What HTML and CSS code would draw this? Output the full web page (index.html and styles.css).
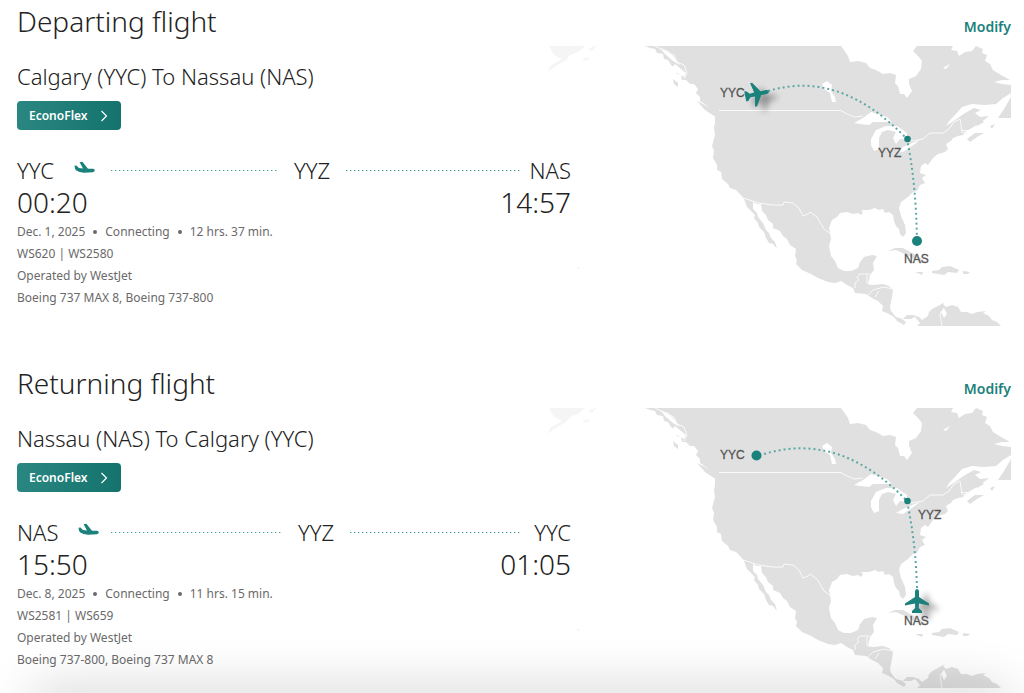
FILE: index.html
```html
<!DOCTYPE html>
<html lang="en">
<head>
<meta charset="utf-8">
<title>Flight summary</title>
<meta name="viewport" content="width=device-width, initial-scale=1">
<link rel="stylesheet" href="styles.css">
</head>
<body>
<svg class="defs" aria-hidden="true">
  <defs>
    <filter id="shadow" x="-50%" y="-50%" width="200%" height="200%"><feGaussianBlur stdDeviation="3"/></filter>
    <symbol id="takeoff" viewBox="0 0 21 13">
      <path d="M.5 4.800 2.400 4.600 5 7 9 7.400 5.600 1.200 8.400 .8 14 7.800 19.200 7.700Q21 8.200 20.800 9.600 20.600 11 19 11.200L10 11.800Q5 11.400 2.400 9.400 .6 8 .5 4.800Z"/>
    </symbol>
    <g id="plane">
      <path d="M0-12Q2-12 2-9.500V-4L12 2.500V4.500L2 2.500 1.800 7 5 10V12H-5V10L-1.800 7-2 2.500-12 4.500V2.500L-2-4V-9.500Q-2-12 0-12Z"/>
    </g>
    <g id="basemap">
      <g class="land">
        <path d="M645 46 650 48 655 49 657 53 663 54 664 59 668 60 671 65 675 68 677 74 681 75 682 80 686 80 690 84 694 84 698 89 696 93 700 97 700 101 706 105 712 111 715 115 715 123 714 128 715 135 712 146 714 151 713 158 717 165 717 170 721 172 722 179 728 184 730 188 736 190 741 195 744 199 747 207 750 210 755 215 754 218 758 223 759 227 764 232 766 238 769 243 773 244 777 249 775 242 771 238 769 233 766 230 763 223 758 217 757 213 753 209 753 202 757 204 761 204 762 211 766 215 768 220 773 224 773 228 780 231 783 236 787 239 790 245 796 249 795 256 797 260 796 264 802 270 811 274 818 278 828 282 835 283 841 281 847 285 853 288 855 293 866 294 872 298 878 301 883 306 882 311 887 313 894 317 897 321 904 325 906 322 902 319 911 319 915 317 920 323 917 326H1001L997 322 992 320 989 316 983 313 986 311 977 312 972 314 967 312 961 312 958 307 952 305 946 307 943 304 945 302 938 306 932 309 929 312 928 316 922 320 919 317 913 315 907 315 903 319 896 317 891 311 890 307 891 302 892 297 893 290 889 286 883 284 873 285 868 284 870 275 874 270 873 263 877 256 872 255 864 257 860 262 858 268 851 271 844 271 838 268 835 261 831 256 829 246 831 239 830 233 829 228 832 220 837 217 840 213 847 212 853 214 858 213 861 215 863 212 861 210 869 210 875 208 879 210 883 209 885 213 889 212 893 215 894 221 896 226 899 229 900 234 903 237 906 233 905 225 901 216 899 208 901 202 908 197 913 192 917 191 920 185 925 183 922 178 926 175 920 173 921 166 925 163 928 165 933 158 938 154 945 152 948 149 946 144 951 141 953 138 958 136 963 135 966 131 972 128 978 124 984 120 989 116 980 117 975 113 981 110 974 108 965 113 955 120 946 126 950 120 954 116 962 107 972 104 984 105 996 104 1003 98 1011 93V85L1002 84 994 82 1002 80 1010 80 1001 75 993 70 990 64 985 61 987 55 982 53 983 49 976 46 972 51 965 52 959 56 957 51 951 50 953 46H917L913 51 918 56 922 61 921 69 916 76 909 79 909 84 912 91 907 98 904 94 900 94 898 86 895 83 896 75 890 73 883 74 876 70 870 68 866 63 858 61 850 62 848 56 844 50 841 46Z"/>
        <path d="M998 118 1004 109 1011 97V118ZM967 139 975 133 984 133 977 137 970 142ZM977 116 984 122 977 126 973 121ZM990 126 995 124 992 129Z"/>
        <path d="M673 79 678 83 678 87 674 84ZM697 101 705 105 715 112 719 117 714 116 705 110Z"/>
        <path d="M888 251 895 248 903 248 914 254 923 260 929 263 920 263 907 255 896 250ZM932 271 939 270 942 267 950 266 959 270 957 273 948 272 944 275 932 273ZM915 272 923 272 922 275ZM963 271 970 272 968 274 963 274Z"/>
      </g>
      <path class="haze" d="M549 46H585L578 52 570 55 566 60 554 67 548 72 550 66 562 59 554 55ZM588 49 597 45 592 51ZM582 59 590 57 586 61ZM577 267 580 267 578 270Z"/>
      <g class="water">
        <path d="M822 84 827 81 832 85 831 91 835 97 836 102 832 102 830 93 824 89Z"/>
        <path d="M854 123 863 118 871 112 878 114 887 117 892 122 882 122 873 122 869 125 860 124Z"/>
        <path d="M871 139 876 130 886 126 897 126 907 133 907 140 900 139 896 144 893 138 896 132 888 130 882 132 879 138 879 149 874 151 871 145Z"/>
        <path d="M896 151 903 147 912 143 920 140 912 146 903 152ZM943 68 950 64 946 69ZM941 312 944 308 947 314 944 318Z"/>
        <path d="M671 69 675 64 681 69 686 73 684 77 677 73ZM660 48 668 51 674 57 680 65 673 61 665 54Z"/>
      </g>
      <path class="border" d="M655 46 667 52 674 55 677 62 684 65 687 73 684 79M719 110.500H841L845 113 854 117 863 116M907 138 912 141 923 139 930 133 943 133 949 129 954 122 960 119 962 132 967 134M969 131 961 130M743 198 759 203 772 205 783 205 784 202 793 203 799 208 803 216 808 214 810 212 817 217 824 229 831 234M855 288V283L859 280 857 277 860 274H870M867 275V283L871 285M868 295 873 290 884 287 893 289M875 297 879 291M944 308 940 314 942 326"/>
    </g>
  </defs>
</svg>

<main class="summary">
  <section class="flight">
    <header class="flight-head">
      <h2 class="title">Departing flight</h2>
      <a class="modify" href="#departing" aria-label="Modify departing flight">Modify</a>
    </header>
    <div class="flight-body">
      <div class="details">
        <h3 class="route">Calgary (YYC) To Nassau (NAS)</h3>
        <button class="fare" type="button">EconoFlex
          <svg class="chevron" viewBox="0 0 8 12" aria-hidden="true"><path d="M1.500 1 6.500 6 1.500 11"/></svg>
        </button>
        <div class="timeline">
          <div class="origin"><span>YYC</span><svg class="takeoff" aria-hidden="true"><use href="#takeoff"/></svg></div>
          <span class="leg leg-short"></span>
          <span class="stop">YYZ</span>
          <span class="leg"></span>
          <span class="destination">NAS</span>
        </div>
        <div class="times"><time>00:20</time><time>14:57</time></div>
        <ul class="facts"><li>Dec. 1, 2025</li><li>Connecting</li><li>12 hrs. 37 min.</li></ul>
        <p class="info">WS620 | WS2580</p>
        <p class="info">Operated by WestJet</p>
        <p class="info">Boeing 737 MAX 8, Boeing 737-800</p>
      </div>
      <svg class="map" viewBox="547 45 464 282" role="img" aria-label="Route from YYC through YYZ to NAS">
        <use href="#basemap"/>
        <path class="path" d="M768 91Q840 69 907 139Q916 182 917 241"/>
        <circle class="dot" cx="907.500" cy="139" r="3.300"/>
        <circle class="dot" cx="917" cy="241" r="5"/>
        <use class="plane-shadow" href="#plane" transform="translate(765 99) rotate(78)"/>
        <use class="plane" href="#plane" transform="translate(757 94) rotate(78)"/>
        <text class="label" x="720" y="97">YYC</text>
        <text class="label" x="878" y="157">YYZ</text>
        <text class="label" x="904" y="263">NAS</text>
      </svg>
    </div>
  </section>

  <section class="flight">
    <header class="flight-head">
      <h2 class="title">Returning flight</h2>
      <a class="modify" href="#returning" aria-label="Modify returning flight">Modify</a>
    </header>
    <div class="flight-body">
      <div class="details">
        <h3 class="route">Nassau (NAS) To Calgary (YYC)</h3>
        <button class="fare" type="button">EconoFlex
          <svg class="chevron" viewBox="0 0 8 12" aria-hidden="true"><path d="M1.500 1 6.500 6 1.500 11"/></svg>
        </button>
        <div class="timeline">
          <div class="origin"><span>NAS</span><svg class="takeoff" aria-hidden="true"><use href="#takeoff"/></svg></div>
          <span class="leg"></span>
          <span class="stop">YYZ</span>
          <span class="leg"></span>
          <span class="destination">YYC</span>
        </div>
        <div class="times"><time>15:50</time><time>01:05</time></div>
        <ul class="facts"><li>Dec. 8, 2025</li><li>Connecting</li><li>11 hrs. 15 min.</li></ul>
        <p class="info">WS2581 | WS659</p>
        <p class="info">Operated by WestJet</p>
        <p class="info">Boeing 737-800, Boeing 737 MAX 8</p>
      </div>
      <svg class="map" viewBox="547 45 464 282" role="img" aria-label="Route from NAS through YYZ to YYC">
        <use href="#basemap"/>
        <path class="path" d="M764 92Q840 69 907 139Q916 182 917 228"/>
        <circle class="dot" cx="907.500" cy="139" r="3.300"/>
        <circle class="dot" cx="756.500" cy="93.500" r="5"/>
        <use class="plane-shadow" href="#plane" transform="translate(926 244)"/>
        <use class="plane" href="#plane" transform="translate(917 239)"/>
        <text class="label" x="720" y="97">YYC</text>
        <text class="label" x="918" y="157">YYZ</text>
        <text class="label" x="904" y="263">NAS</text>
      </svg>
    </div>
  </section>
</main>
<div class="footer-shade"></div>
</body>
</html>
```
FILE: styles.css
```css
* { box-sizing: border-box; }
html { overflow: hidden; }
body {
  margin: 0;
  background: #fff;
  color: #222;
  font-family: "Noto Sans", "Open Sans", sans-serif;
}
h2, h3, p, ul { margin: 0; padding: 0; }
.defs { position: absolute; width: 0; height: 0; }
.summary {
  display: flex;
  flex-direction: column;
  gap: 35px;
  padding: 0 13px 0 17px;
}
.flight-head {
  display: flex;
  justify-content: space-between;
  height: 45px;
}
.title { font-size: 28px; line-height: 42px; font-weight: 300; }
.modify {
  padding-top: 16px;
  color: #1b817b;
  font-size: 14px;
  line-height: 22px;
  font-weight: 600;
  text-decoration: none;
}
.flight-body {
  display: grid;
  grid-template-columns: 530fr 24fr 440fr;
}
.details { grid-area: 1 / 1 / 2 / 3; z-index: 1; }
.map { grid-area: 1 / 2 / 2 / 4; display: block; width: 100%; }
.route {
  padding-top: 16px;
  font-size: 22px;
  line-height: 30px;
  font-weight: 300;
}
.fare {
  display: flex;
  align-items: center;
  gap: 12px;
  height: 29px;
  margin-top: 10px;
  padding: 1px 13px 0 12px;
  border: 0;
  border-radius: 4px;
  background: linear-gradient(90deg, #2a8680, #14736d);
  color: #fff;
  font: 600 12px/16px "Noto Sans", sans-serif;
}
.chevron { width: 8px; height: 12px; fill: none; stroke: #fff; stroke-width: 1.2; }
.timeline {
  display: flex;
  align-items: center;
  margin-top: 24px;
  font-size: 22px;
  line-height: 32px;
  font-weight: 300;
}
.origin { display: flex; align-items: center; gap: 20px; width: 94px; flex: none; }
.takeoff { width: 21px; height: 13px; flex: none; margin-bottom: 5px; fill: #1b817b; }
.leg {
  flex: 22 1 0;
  height: 1px;
  background: repeating-linear-gradient(90deg, #3f9b96 0 1px, #b9dddb 1px 2px, #fff 2px 4px);
}
.leg-short { flex-grow: 21; }
.stop { margin: 0 16px 0 17px; }
.destination { flex: none; min-width: 51px; text-align: right; }
.times {
  display: flex;
  justify-content: space-between;
  font-size: 28px;
  line-height: 32px;
  font-weight: 300;
}
.facts, .info { color: #6a6a6a; font-size: 12px; line-height: 22px; }
.facts { display: flex; list-style: none; margin-top: 3px; }
.facts li { display: flex; align-items: center; }
.facts li + li::before {
  content: "";
  width: 4px;
  height: 4px;
  margin: 0 8px;
  border-radius: 50%;
  background: #6a6a6a;
}
.land { fill: #e0e0e0; }
.haze { fill: #f5f5f5; }
.water { fill: #fff; }
.border { fill: none; stroke: #fafafa; stroke-width: 1; }
.path {
  fill: none;
  stroke: #5ba9a4;
  stroke-width: 2;
  stroke-dasharray: 2 3;
}
.dot, .plane { fill: #1b817b; }
.plane-shadow { fill: #000; opacity: .4; filter: url(#shadow); }
.label {
  fill: #555;
  stroke: #555;
  stroke-width: .3;
  font-family: "Liberation Sans", Arial, sans-serif;
  font-size: 12px;
}
.footer-shade {
  position: fixed;
  z-index: 2;
  right: 16px;
  bottom: -20px;
  left: 32px;
  height: 20px;
  box-shadow: 0 0 50px rgba(0, 0, 0, .28);
  pointer-events: none;
}
```
